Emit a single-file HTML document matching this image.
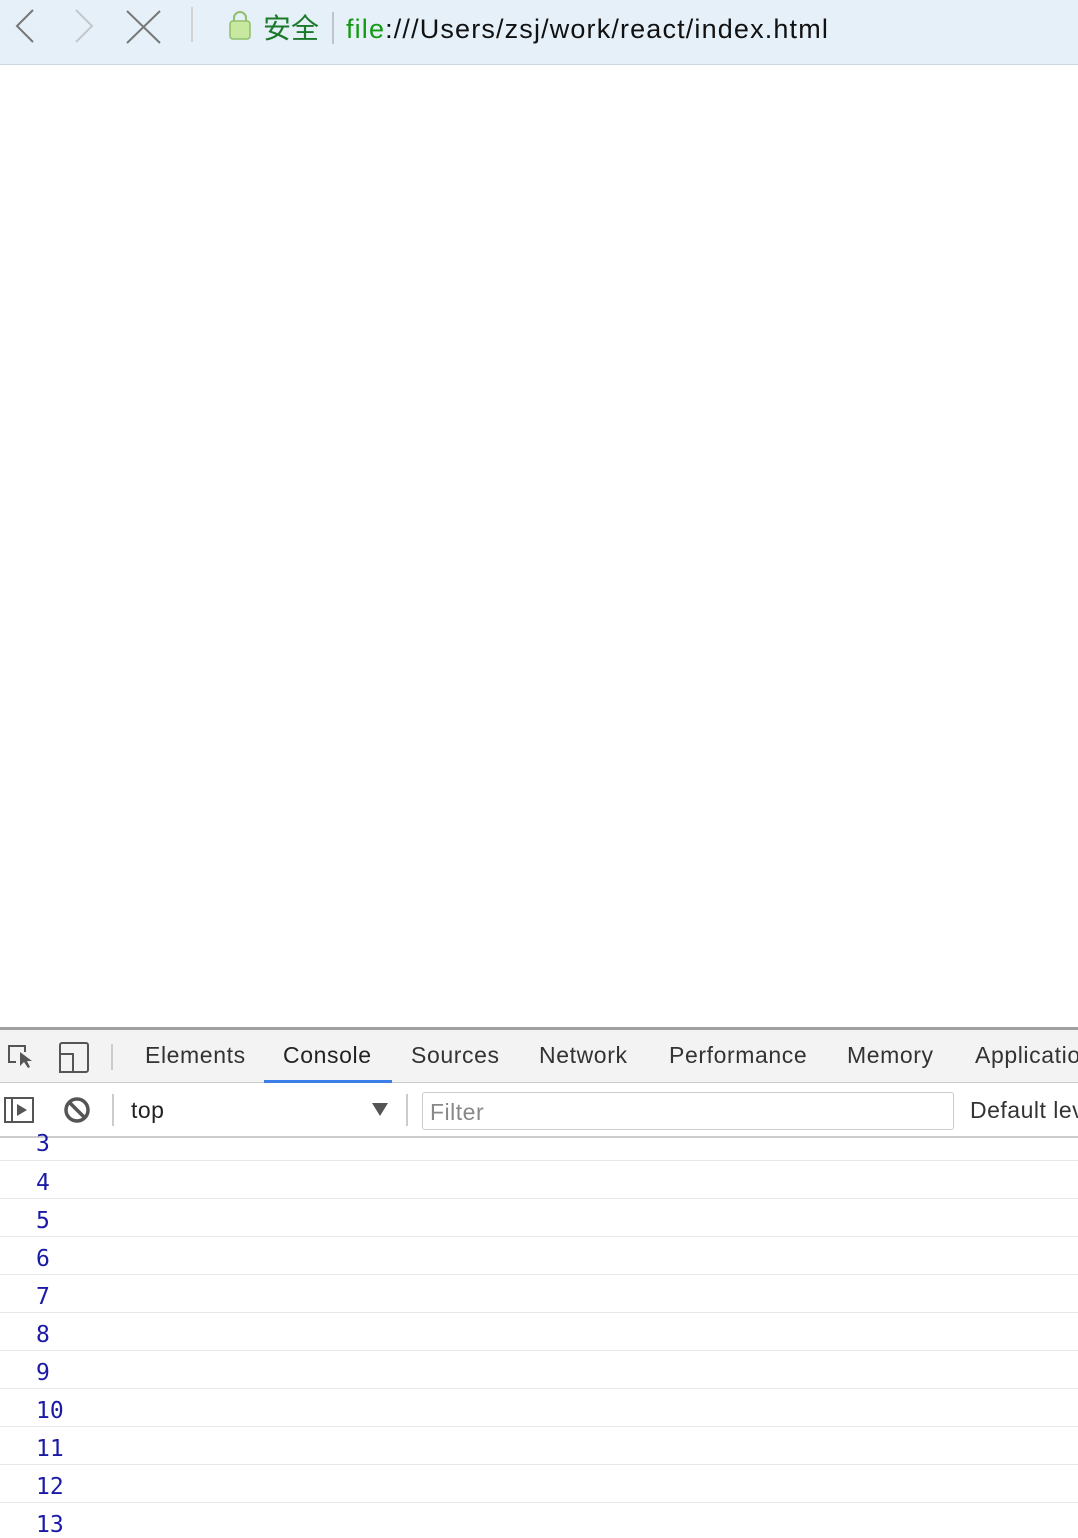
<!DOCTYPE html>
<html><head><meta charset="utf-8"><style>
*{margin:0;padding:0;box-sizing:border-box}
body{width:1078px;height:1520px;overflow:hidden;background:#fff;position:relative;font-family:"Liberation Sans","Noto Sans CJK SC",sans-serif}
.a{position:absolute;white-space:nowrap}
.tab{position:absolute;top:1040px;font-size:23px;color:#333;line-height:30px;letter-spacing:0.6px}
.row{position:absolute;left:0;width:1078px;height:1px;background:#e8e8e8}
.n{position:absolute;left:36px;font-family:"DejaVu Sans Mono","Liberation Mono",monospace;font-size:23px;color:#1a1aa6;line-height:26px}
</style></head><body>
<div class="a" style="left:0;top:0;width:1078px;height:65px;background:#e6f0f8;border-bottom:1px solid #ccd6df"></div>
<svg class="a" style="left:0;top:0" width="340" height="60">
<path d="M33 10 L17 26 L33 42" stroke="#777" stroke-width="2" fill="none"/>
<path d="M76 10 L92 26 L76 42" stroke="#c4c8cc" stroke-width="2" fill="none"/>
<path d="M127 11 L160 43 M160 11 L127 43" stroke="#777" stroke-width="2" fill="none"/>
<line x1="192" y1="7" x2="192" y2="42" stroke="#c8c8c8" stroke-width="1.5"/>
<path d="M234 22 v-4 a6 6 0 0 1 12 0 v4" stroke="#8fbf6a" stroke-width="2" fill="none"/>
<rect x="230" y="21" width="20" height="18" rx="3" fill="#c8e8a0" stroke="#8fbf6a" stroke-width="1.5"/>
<line x1="333" y1="12" x2="333" y2="44" stroke="#999" stroke-width="1"/>
</svg>
<div class="a" style="left:263px;top:12px;font-size:28px;color:#1a7a2a;line-height:34px">安全</div>
<div class="a" style="left:346px;top:12px;font-size:27px;color:#111;line-height:34px;letter-spacing:1.15px"><span style="color:#139a13">file</span>:///Users/zsj/work/react/index.html</div>

<div class="a" style="left:0;top:1027px;width:1078px;height:3px;background:#a0a0a0"></div>
<div class="a" style="left:0;top:1030px;width:1078px;height:53px;background:#f3f3f3;border-bottom:1px solid #ccc"></div>
<svg class="a" style="left:0;top:1030px" width="130" height="52">
<path d="M16 32 h-7 v-16 h16 v6" stroke="#555" stroke-width="2" fill="none"/>
<path d="M20 22 L20 36 L24 32 L28 38 L30 37 L27 31 L32 31 Z" fill="#555"/>
<rect x="60" y="13" width="28" height="29" rx="2" stroke="#555" stroke-width="2" fill="none"/>
<rect x="60" y="24" width="13" height="18" stroke="#555" stroke-width="2" fill="#f3f3f3"/>
<line x1="112" y1="14" x2="112" y2="40" stroke="#ccc" stroke-width="2"/>
</svg>
<div class="tab" style="left:145px">Elements</div>
<div class="tab" style="left:283px;color:#222">Console</div>
<div class="a" style="left:264px;top:1080px;width:128px;height:3px;background:#3b7ee8"></div>
<div class="tab" style="left:411px">Sources</div>
<div class="tab" style="left:539px">Network</div>
<div class="tab" style="left:669px">Performance</div>
<div class="tab" style="left:847px">Memory</div>
<div class="tab" style="left:975px">Application</div>

<svg class="a" style="left:0;top:1084px" width="420" height="54">
<rect x="5" y="14" width="28" height="24" stroke="#555" stroke-width="2" fill="none"/>
<line x1="12" y1="14" x2="12" y2="38" stroke="#555" stroke-width="2"/>
<path d="M17 20 L27 26 L17 32 Z" fill="#555"/>
<circle cx="77" cy="26" r="11" stroke="#555" stroke-width="3.5" fill="none"/>
<line x1="70" y1="19" x2="84" y2="33" stroke="#555" stroke-width="3.5"/>
<line x1="113" y1="10" x2="113" y2="42" stroke="#ccc" stroke-width="2"/>
<path d="M372 19 L388 19 L380 32 Z" fill="#555"/>
<line x1="407" y1="10" x2="407" y2="42" stroke="#ccc" stroke-width="2"/>
</svg>
<div class="a" style="left:131px;top:1096px;font-size:23px;color:#222;line-height:28px;letter-spacing:0.5px">top</div>
<div class="a" style="left:422px;top:1092px;width:532px;height:38px;border:1.5px solid #ccc;border-radius:3px"></div>
<div class="a" style="left:430px;top:1098px;font-size:23px;color:#888;line-height:28px;letter-spacing:0.5px">Filter</div>
<div class="a" style="left:970px;top:1096px;font-size:23px;color:#333;line-height:28px;letter-spacing:0.5px">Default levels</div>
<div class="a" style="left:0;top:1136px;width:1078px;height:2px;background:#ccc"></div>

<div class="n" style="top:1131px">3</div>
<div class="row" style="top:1160px"></div>
<div class="n" style="top:1170px">4</div>
<div class="row" style="top:1198px"></div>
<div class="n" style="top:1208px">5</div>
<div class="row" style="top:1236px"></div>
<div class="n" style="top:1246px">6</div>
<div class="row" style="top:1274px"></div>
<div class="n" style="top:1284px">7</div>
<div class="row" style="top:1312px"></div>
<div class="n" style="top:1322px">8</div>
<div class="row" style="top:1350px"></div>
<div class="n" style="top:1360px">9</div>
<div class="row" style="top:1388px"></div>
<div class="n" style="top:1398px">10</div>
<div class="row" style="top:1426px"></div>
<div class="n" style="top:1436px">11</div>
<div class="row" style="top:1464px"></div>
<div class="n" style="top:1474px">12</div>
<div class="row" style="top:1502px"></div>
<div class="n" style="top:1512px">13</div>
</body></html>
